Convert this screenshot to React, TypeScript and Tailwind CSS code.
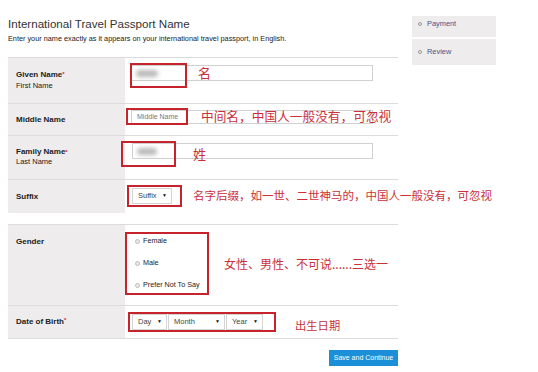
import React from "react";

const RED_BOX = "absolute border-2 border-[#c6232d]";
const RED_TEXT =
  "absolute whitespace-nowrap text-[#c9303a] font-['Noto_Sans_CJK_SC',sans-serif]";

function Blur({ w }: { w: number }) {
  return (
    <div className="flex items-center h-full pl-[4px]">
      <div
        className="h-[7px] bg-[#b9b9b9] blur-[2px] rounded-sm"
        style={{ width: w }}
      />
    </div>
  );
}

function Select({ label, w }: { label: string; w: number }) {
  return (
    <div
      className="h-[16px] flex items-center justify-between pl-[5px] pr-[4px] bg-white border border-[#d4d4d4] text-[7.5px] text-[#444]"
      style={{ width: w }}
    >
      <span>{label}</span>
      <span className="text-[5px] text-[#111]">▼</span>
    </div>
  );
}

function Radio({ label }: { label: string }) {
  return (
    <div className="h-[22px] flex items-center gap-[3px]">
      <span className="w-[5px] h-[5px] rounded-full border border-[#bdbdbd] bg-[#e9e9e9]" />
      <span className="text-[7.2px] text-[#222]">{label}</span>
    </div>
  );
}

function Label({ children, className = "" }: { children: React.ReactNode; className?: string }) {
  return (
    <div className={`w-[117px] shrink-0 bg-[#eeecec] pl-[8px] text-[8px] text-[#222] ${className}`}>
      {children}
    </div>
  );
}

const Star = () => <span className="text-[6px] align-top text-[#c23]">*</span>;

export default function App() {
  return (
    <div className="w-[538px] h-[372px] bg-white flex font-['Liberation_Sans',Arial,sans-serif] overflow-hidden">
      {/* main form */}
      <div className="w-[398px] pl-[8px] pt-[17px] flex flex-col">
        <h1 className="text-[11.6px] leading-[14px] text-[#333]">
          International Travel Passport Name
        </h1>
        <p className="mt-[3px] text-[7.3px] leading-[9px] text-[#222]">
          Enter your name exactly as it appears on your international travel passport, in English.
        </p>

        <div className="mt-[14px] flex flex-col">
          {/* Given name */}
          <div className="h-[46px] flex border-t border-[#dcdcdc]">
            <Label className="pt-[11px] leading-[11px]">
              <div className="font-bold">Given Name<Star /></div>
              <div className="text-[7.5px]">First Name</div>
            </Label>
            <div className="relative flex-1">
              <div className="ml-[6px] mt-[7px] w-[242px] h-[16px] border border-[#d0d0d0] bg-white">
                <Blur w={22} />
              </div>
              <div className={`${RED_BOX} left-[5px] top-[5px] w-[57px] h-[25px]`} />
              <span className={`${RED_TEXT} left-[73px] top-[8px] text-[13px] leading-[13px]`}>名</span>
            </div>
          </div>

          {/* Middle name */}
          <div className="h-[32px] flex border-t border-[#dcdcdc]">
            <Label className="flex items-center font-bold">Middle Name</Label>
            <div className="relative flex-1">
              <div className="ml-[6px] mt-[6px] w-[242px] h-[14px] border border-[#d0d0d0] bg-white flex items-center pl-[5px] text-[7px] text-[#777]">
                Middle Name
              </div>
              <div className={`${RED_BOX} left-[1px] top-[4px] w-[62px] h-[17px]`} />
              <span className={`${RED_TEXT} left-[76px] top-[5px] text-[12.7px] leading-[13px]`}>
                中间名，中国人一般没有，可忽视
              </span>
            </div>
          </div>

          {/* Family name */}
          <div className="h-[44px] flex border-t border-[#dcdcdc]">
            <Label className="pt-[11px] leading-[10px]">
              <div className="font-bold">Family Name<Star /></div>
              <div className="text-[7.5px]">Last Name</div>
            </Label>
            <div className="relative flex-1">
              <div className="ml-[7px] mt-[7px] w-[241px] h-[16px] border border-[#d0d0d0] bg-white">
                <Blur w={20} />
              </div>
              <div className={`${RED_BOX} left-[-4px] top-[5px] w-[55px] h-[26px]`} />
              <span className={`${RED_TEXT} left-[68px] top-[11px] text-[13px] leading-[13px]`}>姓</span>
            </div>
          </div>

          {/* Suffix */}
          <div className="h-[34px] flex border-t border-[#dcdcdc]">
            <Label className="flex items-center font-bold">Suffix</Label>
            <div className="relative flex-1">
              <div className="ml-[7px] mt-[8px]">
                <Select label="Suffix" w={40} />
              </div>
              <div className={`${RED_BOX} left-[2px] top-[5px] w-[55px] h-[22px]`} />
              <span className={`${RED_TEXT} left-[68px] top-[9px] text-[11.5px] leading-[12px]`}>
                名字后缀，如一世、二世神马的，中国人一般没有，可忽视
              </span>
            </div>
          </div>

          <div className="h-[11px]" />

          {/* Gender */}
          <div className="h-[81px] flex border-t border-[#dcdcdc]">
            <Label className="pt-[12px] leading-[10px] font-bold">Gender</Label>
            <div className="relative flex-1">
              <div className="ml-[10px] mt-[5px] flex flex-col">
                <Radio label="Female" />
                <Radio label="Male" />
                <Radio label="Prefer Not To Say" />
              </div>
              <div className={`${RED_BOX} left-[0px] top-[7px] w-[84px] h-[63px]`} />
              <span className={`${RED_TEXT} left-[99px] top-[32px] text-[12px] leading-[13px]`}>
                女性、男性、不可说......三选一
              </span>
            </div>
          </div>

          {/* Date of birth */}
          <div className="h-[34px] flex border-y border-[#dcdcdc]">
            <Label className="flex items-center font-bold">
              <span>Date of Birth<Star /></span>
            </Label>
            <div className="relative flex-1">
              <div className="ml-[7px] mt-[8px] flex gap-[1px]">
                <Select label="Day" w={35} />
                <Select label="Month" w={57} />
                <Select label="Year" w={37} />
              </div>
              <div className={`${RED_BOX} left-[3px] top-[6px] w-[148px] h-[20px]`} />
              <span className={`${RED_TEXT} left-[170px] top-[13px] text-[11.3px] leading-[12px]`}>
                出生日期
              </span>
            </div>
          </div>

          <button className="self-end mt-[11px] w-[69px] h-[16px] bg-[#1b8fd7] text-white text-[7px] leading-[16px]">
            Save and Continue
          </button>
        </div>
      </div>

      {/* side steps */}
      <div className="ml-[14px] pt-[16px] w-[84px] flex flex-col gap-[2px]">
        <div className="h-[21px] bg-[#eeecec] flex items-start pt-[3px] pl-[6px] gap-[5px] text-[7.4px] leading-[10px] text-[#44548a]">
          <span className="mt-[3px] w-[4px] h-[4px] rounded-full border border-[#999]" />
          Payment
        </div>
        <div className="h-[26px] bg-[#eeecec] flex items-start pt-[8px] pl-[6px] gap-[5px] text-[7.4px] leading-[10px] text-[#44548a]">
          <span className="mt-[3px] w-[4px] h-[4px] rounded-full border border-[#999]" />
          Review
        </div>
      </div>
    </div>
  );
}
